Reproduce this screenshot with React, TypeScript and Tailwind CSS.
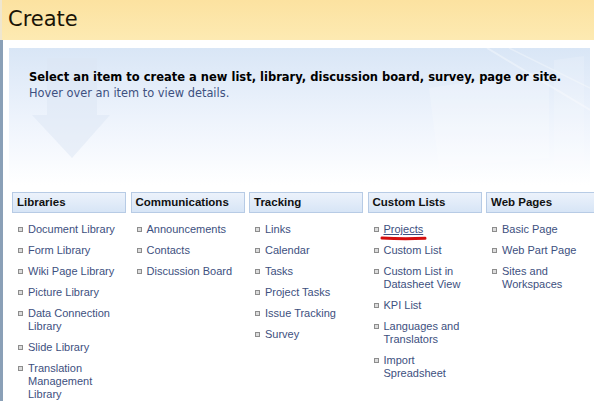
import React from 'react';

interface Category {
  title: string;
  items: string[];
}

const categories: Category[] = [
  {
    title: 'Libraries',
    items: [
      'Document Library',
      'Form Library',
      'Wiki Page Library',
      'Picture Library',
      'Data Connection Library',
      'Slide Library',
      'Translation Management Library',
    ],
  },
  {
    title: 'Communications',
    items: ['Announcements', 'Contacts', 'Discussion Board'],
  },
  {
    title: 'Tracking',
    items: ['Links', 'Calendar', 'Tasks', 'Project Tasks', 'Issue Tracking', 'Survey'],
  },
  {
    title: 'Custom Lists',
    items: [
      'Projects',
      'Custom List',
      'Custom List in Datasheet View',
      'KPI List',
      'Languages and Translators',
      'Import Spreadsheet',
    ],
  },
  {
    title: 'Web Pages',
    items: ['Basic Page', 'Web Part Page', 'Sites and Workspaces'],
  },
];

const App: React.FC = () => {
  return (
    <div className="w-[594px] h-[401px] overflow-hidden bg-white font-['Liberation_Sans',Arial,sans-serif]">
      {/* page title bar */}
      <div className="h-[40px] flex items-center pl-[6px] pr-[4px] bg-gradient-to-b from-[#fce2a0] to-[#fdeab2] border-l-[2px] border-[#efe6cf]">
        <h1 className="text-[21px] leading-none text-[#1a1406] font-['DejaVu_Sans',Verdana,sans-serif] pb-[2px]">
          Create
        </h1>
      </div>

      <div className="border-l-[3px] border-[#8aa0b7] h-[361px] pr-[4px]">
        {/* intro panel */}
        <div className="pt-[8px] pl-[6px]">
          <div className="relative h-[137px] bg-gradient-to-b from-[#d9e6f6] via-[#edf3fc] to-white pl-[20px] pt-[21px] overflow-hidden">
            <svg
              className="absolute left-0 top-0"
              width="581"
              height="137"
              viewBox="0 0 581 137"
            >
              {/* faint arrow */}
              <path d="M38 10 H88 V67 H101 L63 110 L23 67 H38 Z" fill="#dbe6f4" opacity="0.5" />
              {/* light streaks on the right */}
              <path d="M478 0 L581 62" stroke="#ffffff" strokeWidth="2" opacity="0.35" />
              <path d="M500 0 L581 40" stroke="#ffffff" strokeWidth="1.5" opacity="0.3" />
              <path d="M420 40 L540 22 L540 110 L430 120 Z" fill="#ffffff" opacity="0.2" />
              <path d="M545 12 L575 8 L575 120 L545 118 Z" fill="#ffffff" opacity="0.15" />
            </svg>
            <div className="relative font-['DejaVu_Sans',Verdana,sans-serif] text-[11.5px] leading-[16px]">
              <p className="font-bold text-black">
                Select an item to create a new list, library, discussion board, survey, page or site.
              </p>
              <p className="text-[11.4px] text-[#3d5080]">Hover over an item to view details.</p>
            </div>
          </div>
        </div>

        {/* categories */}
        <div className="mt-[7px] ml-[9px] grid grid-cols-[114px_114px_114px_114px_114px] gap-x-[4.5px]">
          {categories.map(cat => (
            <div key={cat.title}>
              <div className="h-[21px] border border-[#b7cbe5] bg-gradient-to-b from-[#ecf2fb] to-[#d7e5f6] pl-[4px] text-[11.5px] leading-[19px] font-bold text-[#111]">
                {cat.title}
              </div>
              <ul className="mt-[10px]">
                {cat.items.map(item => (
                  <li key={item} className="relative flex mb-[8px]">
                    <span className="mt-[4px] ml-[6px] w-[5px] h-[5px] shrink-0 border border-[#8d8d8d] bg-[#dcdcdc]" />
                    <span
                      className={
                        item === 'Projects'
                          ? 'ml-[5px] w-[96px] text-[11px] leading-[13px] text-[#3d5080] underline'
                          : 'ml-[5px] w-[96px] text-[11px] leading-[13px] text-[#3d5080]'
                      }
                    >
                      {item}
                    </span>
                    {item === 'Projects' && (
                      <svg className="absolute left-[12px] top-[12px]" width="48" height="6" viewBox="0 0 48 6">
                        <path d="M2 3 Q24 4.2 45 3.2" stroke="#d40f0f" strokeWidth="3" strokeLinecap="round" fill="none" />
                      </svg>
                    )}
                  </li>
                ))}
              </ul>
            </div>
          ))}
        </div>
      </div>
    </div>
  );
};

export default App;
